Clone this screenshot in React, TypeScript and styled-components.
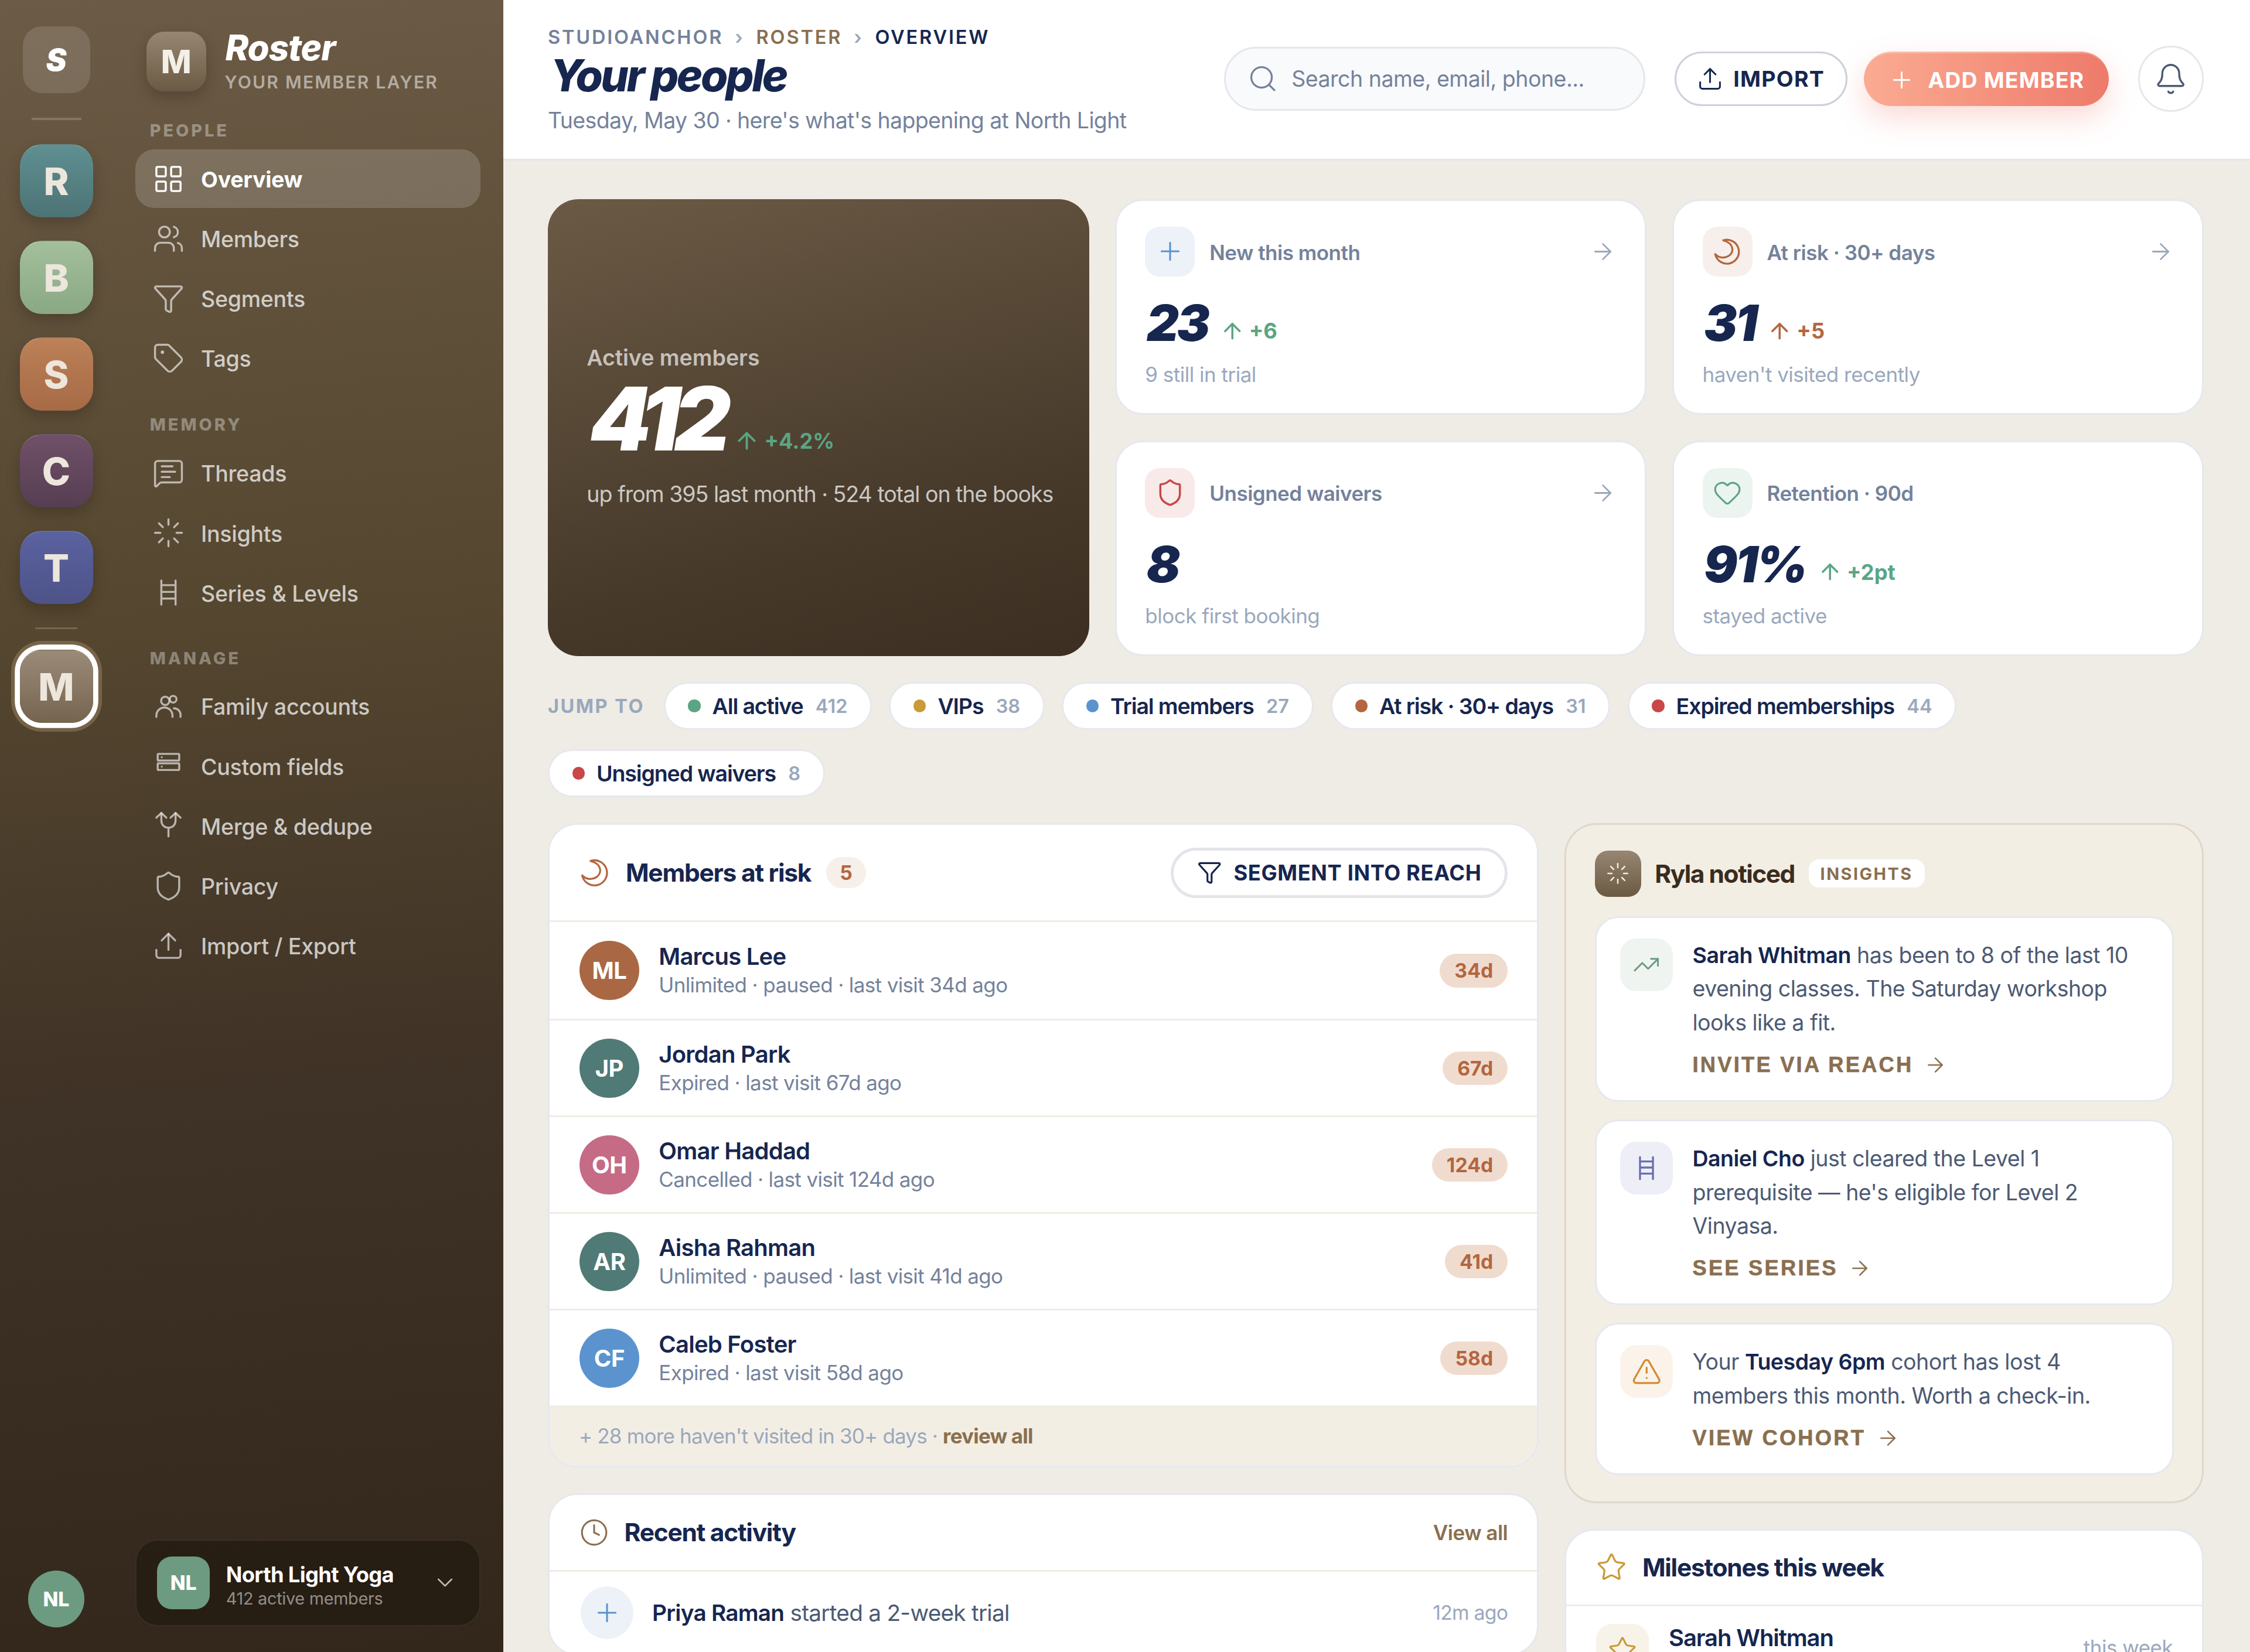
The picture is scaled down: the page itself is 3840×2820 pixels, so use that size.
import React from "react";
import styled, { createGlobalStyle } from "styled-components";
import {
  LayoutGrid, Users, Funnel, Tag, MessageSquareText, Loader, Shield, Upload, Bell, Search, Plus, ArrowRight, ArrowUp,
  Heart, Clock, Star, TrendingUp, TriangleAlert, ChevronDown,
} from "lucide-react";

const NAVY = "#16264f";
const SLATE = "#74829b";
const MUTED = "#9aa8bc";
const BROWN = "#8a6f4f";
const RUST = "#b4663f";
const GREEN = "#5aa583";
const BODY = `"Inter", "Noto Sans", sans-serif`;
const DISPLAY = `"Inter", "Liberation Sans", sans-serif`;
const WIDE = `"Liberation Sans", "Inter", sans-serif`;

const Global = createGlobalStyle`
  html, body { margin: 0; padding: 0; background: #efece5; }
  body { font-family: ${BODY}; color: ${NAVY}; overflow: hidden; }
  * { box-sizing: border-box; }
`;

const Root = styled.div`
  zoom: 2.5;
  width: 1536px;
  height: 1128px;
  display: flex;
  overflow: hidden;
  background: #efece5;
`;

const Side = styled.aside`
  flex: 0 0 343.5px;
  display: flex;
  background: linear-gradient(175deg, #6c5b46 0%, #54462f 38%, #3f3226 66%, #33271b 100%);
`;

const Rail = styled.nav`
  flex: 0 0 76.8px;
  display: flex;
  flex-direction: column;
  align-items: center;
  padding: 18px 0 17px;
`;

const RailLogo = styled.div`
  width: 46px;
  height: 45.5px;
  border-radius: 13px;
  display: grid;
  place-items: center;
  background: rgba(255, 255, 255, 0.13);
  color: #fff;
  font: italic 900 21px ${DISPLAY};
`;

const RailRule = styled.div<{ $w: number; $top: number; $bottom: number }>`
  width: ${(p) => p.$w}px;
  height: 1.5px;
  margin: ${(p) => p.$top}px 0 ${(p) => p.$bottom}px;
  background: rgba(255, 255, 255, 0.18);
`;

const RailTile = styled.div<{ $from: string; $to: string; $active?: boolean }>`
  width: 50px;
  height: 50px;
  margin-bottom: 16px;
  flex: none;
  border-radius: 15px;
  display: grid;
  place-items: center;
  color: #ece6dc;
  font: 800 26px ${BODY};
  background: linear-gradient(180deg, ${(p) => p.$from}, ${(p) => p.$to});
  border-top: 1px solid rgba(255, 255, 255, 0.14);
  box-shadow: ${(p) =>
    p.$active
      ? "0 0 0 3.5px #fff, 0 0 0 6px rgba(150, 125, 95, 0.55)"
      : "0 4px 10px rgba(0, 0, 0, 0.2)"};
`;

const RailAvatar = styled.div`
  margin-top: auto;
  width: 38.5px;
  height: 38.5px;
  border-radius: 50%;
  display: grid;
  place-items: center;
  background: #6d9b82;
  color: #fff;
  font: 800 13.5px ${BODY};
`;

const Panel = styled.div`
  flex: 1;
  display: flex;
  flex-direction: column;
  padding: 21.5px 15.5px 17.5px 15.7px;
`;

const Brand = styled.div`
  display: flex;
  gap: 12.5px;
  padding-left: 7.3px;
  height: 41px;
  align-items: center;
`;

const BrandTile = styled.div`
  width: 41px;
  height: 41px;
  border-radius: 12px;
  display: grid;
  place-items: center;
  color: #f4efe7;
  font: 800 22px ${BODY};
  background: linear-gradient(180deg, #978672, #6a5a43);
  box-shadow: 0 4px 10px rgba(0, 0, 0, 0.2);
`;

const BrandText = styled.div`
  display: flex;
  flex-direction: column;
`;

const BrandName = styled.div`
  color: #fff;
  font: italic 800 24px/23px ${DISPLAY};
  letter-spacing: -0.4px;
  margin-left: 0.5px;
`;

const BrandTag = styled.div`
  margin-top: 5px;
  color: rgba(255, 255, 255, 0.5);
  font: 600 12px/14px ${BODY};
  letter-spacing: 0.9px;
`;

const SectionLabel = styled.div<{ $top: number; $bottom: number }>`
  margin: ${(p) => p.$top}px 0 ${(p) => p.$bottom}px 9.8px;
  color: rgba(255, 255, 255, 0.36);
  font: 800 11.5px/14px ${BODY};
  letter-spacing: 1.6px;
`;

const NavList = styled.div`
  display: flex;
  flex-direction: column;
  gap: 0.85px;
`;

const NavItem = styled.div<{ $active?: boolean }>`
  height: 40px;
  padding-left: 11.3px;
  display: flex;
  align-items: center;
  gap: 11.4px;
  border-radius: 13px;
  color: ${(p) => (p.$active ? "#fff" : "rgba(255,255,255,0.72)")};
  background: ${(p) => (p.$active ? "rgba(255,255,255,0.16)" : "transparent")};
  font: ${(p) => (p.$active ? 700 : 500)} 15px ${BODY};
  letter-spacing: -0.1px;
  svg {
    flex: none;
    opacity: ${(p) => (p.$active ? 1 : 0.85)};
  }
`;

const NavLabel = styled.span`
  padding-top: 1px;
`;

const OrgCard = styled.div`
  margin-top: auto;
  height: 59.5px;
  display: flex;
  align-items: center;
  padding: 0 14.5px 0 14px;
  gap: 11px;
  border-radius: 15px;
  background: rgba(20, 14, 8, 0.42);
  border: 1px solid rgba(255, 255, 255, 0.08);
  color: rgba(255, 255, 255, 0.7);
`;

const OrgTile = styled.div`
  width: 36px;
  height: 36px;
  flex: none;
  border-radius: 10px;
  display: grid;
  place-items: center;
  background: #6d9b82;
  color: #fff;
  font: 800 13.5px ${BODY};
`;

const OrgText = styled.div`
  flex: 1;
  display: flex;
  flex-direction: column;
  padding-top: 3px;
`;

const OrgName = styled.div`
  color: #fff;
  font: 700 14.5px/18px ${BODY};
  letter-spacing: -0.25px;
`;

const OrgSub = styled.div`
  color: rgba(255, 255, 255, 0.5);
  font: 400 11.5px/14px ${BODY};
  letter-spacing: -0.1px;
`;

const Main = styled.main`
  flex: 1;
  min-width: 0;
  display: flex;
  flex-direction: column;
`;

const TopBar = styled.header`
  flex: 0 0 109.5px;
  display: flex;
  align-items: flex-start;
  justify-content: space-between;
  padding: 17px 31.5px 0 30.5px;
  background: #fff;
  border-bottom: 1.5px solid #e5e7ec;
`;

const TitleBlock = styled.div`
  display: flex;
  flex-direction: column;
`;

const Crumbs = styled.div`
  display: flex;
  align-items: center;
  gap: 8px;
  font: 600 13px/17px ${BODY};
  letter-spacing: 1.13px;
  text-transform: uppercase;
`;

const Crumb = styled.span<{ $color: string }>`
  color: ${(p) => p.$color};
`;

const Title = styled.h1`
  margin: -0.5px 0 0 1.5px;
  color: ${NAVY};
  font: italic 800 30px/36px ${DISPLAY};
  letter-spacing: -1.4px;
`;

const Subtitle = styled.div`
  margin-top: 1.5px;
  color: ${SLATE};
  font: 400 15px/22px ${BODY};
  letter-spacing: -0.25px;
`;

const Actions = styled.div`
  display: flex;
  align-items: center;
  height: 45px;
  margin-top: 14.3px;
`;

const SearchBox = styled.div`
  width: 287.5px;
  height: 43.5px;
  display: flex;
  align-items: center;
  gap: 9px;
  padding-left: 15px;
  margin-right: 20px;
  border-radius: 22px;
  background: #f9fafc;
  border: 1.5px solid #e5e7ec;
  color: ${SLATE};
  font: 400 15px ${BODY};
  letter-spacing: -0.2px;
`;

const GhostButton = styled.div`
  width: 118px;
  height: 37.5px;
  margin-right: 11.5px;
  display: flex;
  align-items: center;
  justify-content: center;
  gap: 7px;
  border-radius: 19px;
  border: 1.5px solid #cdd1dc;
  color: ${NAVY};
  font: 700 15px ${BODY};
  letter-spacing: 0.5px;
`;

const PrimaryButton = styled.div`
  width: 167px;
  height: 37.5px;
  margin-right: 20px;
  display: flex;
  align-items: center;
  justify-content: center;
  gap: 9px;
  border-radius: 19px;
  color: #fff;
  font: 700 15px ${BODY};
  letter-spacing: 0.45px;
  background: linear-gradient(90deg, #fbab92, #ee7a6a);
  border-top: 1.5px solid rgba(255, 255, 255, 0.28);
  box-shadow: 0 8px 20px rgba(238, 122, 106, 0.28);
`;

const BellButton = styled.div`
  width: 45px;
  height: 45px;
  display: grid;
  place-items: center;
  border-radius: 50%;
  border: 1.5px solid #e5e7ec;
  color: #4c5a73;
`;

const Content = styled.div`
  flex: 1;
  min-height: 0;
  overflow: hidden;
  padding: 26.5px 31.5px 0 30.5px;
`;

const StatGrid = styled.section`
  display: grid;
  grid-template-columns: 369.5px 1fr 1fr;
  grid-template-rows: 147.25px 147.25px;
  gap: 17.5px;
`;

const Hero = styled.div`
  grid-row: span 2;
  display: flex;
  flex-direction: column;
  justify-content: center;
  padding: 0 26.5px 2px;
  border-radius: 21px;
  color: #fff;
  background: linear-gradient(165deg, #6b5a45 0%, #46392a 70%, #3c2f21 100%);
`;

const HeroLabel = styled.div`
  color: rgba(255, 255, 255, 0.66);
  font: 600 15px/20px ${BODY};
`;

const HeroValueRow = styled.div`
  display: flex;
  align-items: baseline;
  gap: 6px;
  margin-top: -0.5px;
`;

const HeroValue = styled.div`
  margin-left: 2px;
  font: italic 900 60px/64px ${DISPLAY};
  letter-spacing: -4.2px;
`;

const Delta = styled.div<{ $color: string; $size: number }>`
  display: flex;
  align-items: center;
  gap: 3px;
  color: ${(p) => p.$color};
  font: 700 ${(p) => p.$size}px ${BODY};
  white-space: nowrap;
  align-self: flex-end;
`;

const HeroDelta = styled(Delta)`
  margin-bottom: 8px;
`;

const HeroNote = styled.div`
  margin-top: 9.5px;
  color: rgba(255, 255, 255, 0.72);
  font: 400 15px/20px ${BODY};
  letter-spacing: -0.4px;
  white-space: nowrap;
`;

const StatCard = styled.div`
  padding: 17.5px 19.5px 0;
  background: #fff;
  border: 1.5px solid #e6e8ee;
  border-radius: 19px;
`;

const StatHead = styled.div`
  display: flex;
  align-items: center;
  gap: 10px;
  color: ${MUTED};
`;

const IconTile = styled.div<{ $bg: string; $color: string; $size?: number; $radius?: number }>`
  flex: none;
  width: ${(p) => p.$size ?? 34}px;
  height: ${(p) => p.$size ?? 34}px;
  border-radius: ${(p) => p.$radius ?? 10}px;
  display: grid;
  place-items: center;
  background: ${(p) => p.$bg};
  color: ${(p) => p.$color};
`;

const StatLabel = styled.div`
  flex: 1;
  padding-top: 1px;
  color: ${SLATE};
  font: 600 14px ${BODY};
  letter-spacing: -0.2px;
`;

const StatValueRow = styled.div`
  display: flex;
  align-items: baseline;
  gap: 8px;
  margin-top: 14px;
  height: 36px;
`;

const StatValue = styled.div`
  color: ${NAVY};
  font: italic 900 34px/36px ${DISPLAY};
  letter-spacing: -1.4px;
  margin-left: 1px;
`;

const StatDelta = styled(Delta)`
  margin-bottom: 4px;
`;

const StatNote = styled.div`
  margin-top: 7px;
  color: ${MUTED};
  font: 400 14px/20px ${BODY};
  letter-spacing: -0.2px;
`;

const JumpRow = styled.section`
  margin-top: 17.5px;
  display: flex;
  flex-wrap: wrap;
  align-items: center;
  gap: 13px 11.7px;
`;

const JumpLabel = styled.div`
  color: ${MUTED};
  font: 700 13px ${BODY};
  letter-spacing: 1px;
  margin-right: 1.3px;
`;

const Chip = styled.div`
  height: 33px;
  display: flex;
  align-items: center;
  gap: 8.5px;
  padding: 0 15.5px;
  background: #fff;
  border: 1.5px solid #e7e8ec;
  border-radius: 17px;
  color: ${NAVY};
  font: 600 15px ${BODY};
  letter-spacing: -0.45px;
`;

const Dot = styled.span<{ $color: string }>`
  width: 8.5px;
  height: 8.5px;
  margin-right: -0.5px;
  border-radius: 50%;
  background: ${(p) => p.$color};
`;

const ChipCount = styled.span`
  color: ${MUTED};
  font-size: 13px;
  letter-spacing: 0;
`;

const Columns = styled.section`
  margin-top: 17.5px;
  display: grid;
  grid-template-columns: 676.5px 1fr;
  gap: 17.5px;
  align-items: start;
`;

const Column = styled.div`
  display: flex;
  flex-direction: column;
  gap: 17.5px;
`;

const Card = styled.div`
  background: #fff;
  border: 1.5px solid #e6e8ee;
  border-radius: 20px;
  overflow: hidden;
`;

const CardHead = styled.div<{ $h: number }>`
  height: ${(p) => p.$h}px;
  display: flex;
  align-items: center;
  gap: 10.5px;
  padding: 0 20px 0 20.5px;
  border-bottom: 1.5px solid #efece5;
`;

const CardTitle = styled.div`
  color: ${NAVY};
  font: 700 17px ${BODY};
  letter-spacing: -0.5px;
`;

const CountPill = styled.div`
  width: 27px;
  height: 21px;
  border-radius: 10.5px;
  display: grid;
  place-items: center;
  background: #f7efe9;
  color: ${RUST};
  font: 700 13.5px ${BODY};
`;

const OutlineButton = styled.div`
  margin-left: auto;
  width: 230px;
  height: 34.5px;
  display: flex;
  align-items: center;
  justify-content: center;
  gap: 8px;
  border-radius: 18px;
  border: 2px solid #e3e5eb;
  color: ${NAVY};
  font: 700 14.5px ${BODY};
  letter-spacing: 0.25px;
`;

const MemberRow = styled.div`
  height: 66px;
  display: flex;
  align-items: center;
  gap: 13.5px;
  padding: 0 20px 0 20.5px;
  & + & {
    border-top: 1.5px solid #efece5;
  }
`;

const Avatar = styled.div<{ $color: string }>`
  width: 40.5px;
  height: 40.5px;
  flex: none;
  border-radius: 50%;
  display: grid;
  place-items: center;
  background: ${(p) => p.$color};
  color: #fff;
  font: 700 16px ${BODY};
  letter-spacing: -0.2px;
`;

const MemberText = styled.div`
  flex: 1;
  display: flex;
  flex-direction: column;
`;

const MemberName = styled.div`
  color: ${NAVY};
  font: 600 16px/19px ${BODY};
  letter-spacing: -0.3px;
`;

const MemberSub = styled.div`
  margin-top: 1px;
  color: ${SLATE};
  font: 400 14px/18px ${BODY};
  letter-spacing: -0.25px;
`;

const DayPill = styled.div`
  height: 23px;
  padding: 0 10px;
  display: flex;
  align-items: center;
  border-radius: 11.5px;
  background: #f0dccf;
  color: ${RUST};
  font: 700 13.5px ${BODY};
`;

const CardFoot = styled.div`
  height: 41px;
  display: flex;
  align-items: center;
  padding-left: 20px;
  background: #f3eee4;
  color: ${MUTED};
  font: 400 14px ${BODY};
  letter-spacing: -0.33px;
  white-space: pre;
  b {
    color: ${BROWN};
    font-weight: 700;
  }
`;

const HeadLink = styled.div`
  margin-left: auto;
  color: ${BROWN};
  font: 600 14px ${BODY};
  letter-spacing: -0.2px;
`;

const ActivityRow = styled.div`
  height: 56px;
  display: flex;
  align-items: center;
  gap: 13px;
  padding: 0 20px 0 21px;
`;

const ActivityText = styled.div`
  flex: 1;
  color: #4c5a73;
  font: 400 15.5px ${BODY};
  letter-spacing: -0.3px;
  b {
    color: ${NAVY};
    font-weight: 600;
  }
`;

const TimeText = styled.div`
  color: ${MUTED};
  font: 400 13.5px ${BODY};
  letter-spacing: -0.3px;
`;

const InsightPanel = styled.div`
  padding: 17.5px 19.5px 18px;
  background: #f3eee4;
  border: 1.5px solid #dfd7c9;
  border-radius: 22px;
`;

const InsightHead = styled.div`
  display: flex;
  align-items: center;
  gap: 9.5px;
  margin-bottom: 13.3px;
`;

const RylaTile = styled.div`
  width: 31.5px;
  height: 31.5px;
  border-radius: 9px;
  display: grid;
  place-items: center;
  background: linear-gradient(180deg, #978672, #6a5a43);
  color: #f1ece4;
`;

const RylaTitle = styled.div`
  color: #3a2c1e;
  font: 700 17px ${BODY};
  letter-spacing: -0.6px;
`;

const RylaBadge = styled.div`
  height: 19px;
  padding: 0 8px;
  display: flex;
  align-items: center;
  border-radius: 7px;
  background: #fff;
  color: ${BROWN};
  font: 700 11.5px ${BODY};
  letter-spacing: 1px;
`;

const InsightList = styled.div`
  display: flex;
  flex-direction: column;
  gap: 12px;
`;

const InsightCard = styled.div`
  display: flex;
  gap: 13.5px;
  padding: 14px 16px 14px 16px;
  background: #fff;
  border: 1.5px solid #e6e8ee;
  border-radius: 16px;
`;

const InsightBody = styled.div`
  flex: 1;
  min-width: 0;
`;

const InsightText = styled.div`
  color: #4c5a73;
  font: 400 15px/23px ${BODY};
  letter-spacing: -0.2px;
  b {
    color: ${NAVY};
    font-weight: 600;
  }
`;

const InsightAction = styled.div`
  margin-top: 7.5px;
  display: flex;
  align-items: center;
  gap: 7px;
  color: ${BROWN};
  font: 700 14.5px/20px ${WIDE};
  letter-spacing: 1.3px;
  -webkit-text-stroke: 0.25px currentColor;
`;

const MilestoneHead = styled(CardHead)`
  gap: 10.5px;
`;

const MilestoneRow = styled.div`
  display: flex;
  align-items: flex-start;
  gap: 13.5px;
  padding: 12px 20px 0 20.5px;
`;

const MilestoneName = styled.div`
  flex: 1;
  color: ${NAVY};
  font: 600 16px/19px ${BODY};
  letter-spacing: -0.45px;
`;

const MilestoneWhen = styled.div`
  margin-top: 7px;
  color: ${MUTED};
  font: 400 14px/19px ${BODY};
  letter-spacing: -0.2px;
`;

const HeadIcon = styled.span<{ $color: string }>`
  display: flex;
  color: ${(p) => p.$color};
`;

const IconSvg = styled.svg`
  display: block;
  flex: none;
  fill: none;
  stroke: currentColor;
  stroke-linecap: round;
  stroke-linejoin: round;
`;

type IP = { size?: number; sw?: number };
const Ladder = ({ size = 22, sw = 1.5 }: IP) => (
  <IconSvg width={size} height={size} viewBox="0 0 24 24" strokeWidth={sw}>
    <path d="M6.7 3v18M17.3 3v18M6.7 6.5h10.6M6.7 11.5h10.6M6.7 16.5h10.6" />
  </IconSvg>
);
const Family = ({ size = 22, sw = 1.5 }: IP) => (
  <IconSvg width={size} height={size} viewBox="0 0 24 24" strokeWidth={sw}>
    <circle cx="9.6" cy="8" r="3.1" />
    <circle cx="15.5" cy="6.8" r="2.5" />
    <path d="M3 20v-1a6 6 0 0 1 12 0v1" />
    <path d="M16 13.5a5 5 0 0 1 5 5V20" />
  </IconSvg>
);
const Fields = ({ size = 22, sw = 1.5 }: IP) => (
  <IconSvg width={size} height={size} viewBox="0 0 24 24" strokeWidth={sw}>
    <rect x="4" y="3" width="16" height="5" rx="0.6" />
    <rect x="4" y="10" width="16" height="5" rx="0.6" />
    <path d="M7 5.5h.01M7 12.5h.01" />
  </IconSvg>
);
const Fork = ({ size = 22, sw = 1.5 }: IP) => (
  <IconSvg width={size} height={size} viewBox="0 0 24 24" strokeWidth={sw}>
    <path d="M12 20v-6.5M12 13.5c-3.5 0-5.3-2.5-5.3-5.5V2.5M12 13.5c3.5 0 5.3-2.5 5.3-5.5V2.5" />
    <path d="M3 6l3.7-3.5L10.4 6M13.6 6l3.7-3.5L21 6" />
  </IconSvg>
);
const Crescent = ({ size = 20, sw = 1.6 }: IP) => (
  <IconSvg width={size} height={size} viewBox="0 0 24 24" strokeWidth={sw}>
    <path d="M8.7 3a9.8 9.8 0 1 1-6.6 11.4" />
    <path d="M2.1 14.4c3.4 3.4 8 3.4 11.2 1.2 4-2.8 4.8-9.8-4.6-12.6" />
  </IconSvg>
);

const railTiles = [
  ["R", "#5f8f91", "#4d7375"],
  ["B", "#a3bf9c", "#8aa883"],
  ["S", "#bd8158", "#a66a45"],
  ["C", "#6f5068", "#563e52"],
  ["T", "#5a62a0", "#4d5388"],
];

const NI = 22;
const navSections = [
  {
    label: "PEOPLE", top: 19.5, bottom: 6,
    items: [
      ["Overview", <LayoutGrid size={NI} strokeWidth={1.5} />, true],
      ["Members", <Users size={NI} strokeWidth={1.5} />],
      ["Segments", <Funnel size={NI} strokeWidth={1.5} />],
      ["Tags", <Tag size={NI} strokeWidth={1.5} />],
    ],
  },
  {
    label: "MEMORY", top: 18.2, bottom: 6.3,
    items: [
      ["Threads", <MessageSquareText size={NI} strokeWidth={1.5} />],
      ["Insights", <Loader size={NI} strokeWidth={1.5} />],
      ["Series & Levels", <Ladder />],
    ],
  },
  {
    label: "MANAGE", top: 17.7, bottom: 5.8,
    items: [
      ["Family accounts", <Family />],
      ["Custom fields", <Fields />],
      ["Merge & dedupe", <Fork />],
      ["Privacy", <Shield size={NI} strokeWidth={1.5} />],
      ["Import / Export", <Upload size={NI} strokeWidth={1.5} />],
    ],
  },
] as const;

const stats = [
  { label: "New this month", value: "23", delta: "+6", note: "9 still in trial", tone: GREEN, bg: "#edf2f9", color: "#5b93cf", icon: <Plus size={20} strokeWidth={1.5} />, arrow: true },
  { label: "At risk · 30+ days", value: "31", delta: "+5", note: "haven't visited recently", tone: RUST, bg: "#f7efeb", color: RUST, icon: <Crescent />, arrow: true },
  { label: "Unsigned waivers", value: "8", note: "block first booking", tone: GREEN, bg: "#f9eaea", color: "#c94747", icon: <Shield size={20} strokeWidth={1.7} />, arrow: true },
  { label: "Retention · 90d", value: "91%", delta: "+2pt", note: "stayed active", tone: GREEN, bg: "#ecf4f0", color: GREEN, icon: <Heart size={20} strokeWidth={1.5} />, arrow: false },
];

const chips = [
  ["All active", "412", "#5aa583"],
  ["VIPs", "38", "#c99a3a"],
  ["Trial members", "27", "#5b93cf"],
  ["At risk · 30+ days", "31", "#b4663f"],
  ["Expired memberships", "44", "#c94747"],
  ["Unsigned waivers", "8", "#c94747"],
];

const members = [
  ["ML", "#a96843", "Marcus Lee", "Unlimited · paused · last visit 34d ago", "34d"],
  ["JP", "#507a75", "Jordan Park", "Expired · last visit 67d ago", "67d"],
  ["OH", "#c56b85", "Omar Haddad", "Cancelled · last visit 124d ago", "124d"],
  ["AR", "#507a75", "Aisha Rahman", "Unlimited · paused · last visit 41d ago", "41d"],
  ["CF", "#5b93cf", "Caleb Foster", "Expired · last visit 58d ago", "58d"],
];

export default function App() {
  return (
    <>
      <Global />
      <Root>
        <Side>
          <Rail>
            <RailLogo>S</RailLogo>
            <RailRule $w={34} $top={17} $bottom={16.2} />
            {railTiles.map(([l, a, b]) => (
              <RailTile key={l} $from={a} $to={b}>{l}</RailTile>
            ))}
            <RailRule $w={29} $top={0} $bottom={13.8} />
            <RailTile $from="#9a8a78" $to="#75654f" $active>M</RailTile>
            <RailAvatar>NL</RailAvatar>
          </Rail>
          <Panel>
            <Brand>
              <BrandTile>M</BrandTile>
              <BrandText>
                <BrandName>Roster</BrandName>
                <BrandTag>YOUR MEMBER LAYER</BrandTag>
              </BrandText>
            </Brand>
            {navSections.map((s) => (
              <React.Fragment key={s.label}>
                <SectionLabel $top={s.top} $bottom={s.bottom}>{s.label}</SectionLabel>
                <NavList>
                  {s.items.map((it) => (
                    <NavItem key={it[0] as string} $active={Boolean(it[2])}>
                      {it[1]}
                      <NavLabel>{it[0]}</NavLabel>
                    </NavItem>
                  ))}
                </NavList>
              </React.Fragment>
            ))}
            <OrgCard>
              <OrgTile>NL</OrgTile>
              <OrgText>
                <OrgName>North Light Yoga</OrgName>
                <OrgSub>412 active members</OrgSub>
              </OrgText>
              <ChevronDown size={18} strokeWidth={1.5} />
            </OrgCard>
          </Panel>
        </Side>
        <Main>
          <TopBar>
            <TitleBlock>
              <Crumbs>
                <Crumb $color={SLATE}>StudioAnchor</Crumb>
                <Crumb $color={MUTED}>›</Crumb>
                <Crumb $color={BROWN}>Roster</Crumb>
                <Crumb $color={MUTED}>›</Crumb>
                <Crumb $color={NAVY}>Overview</Crumb>
              </Crumbs>
              <Title>Your people</Title>
              <Subtitle>Tuesday, May 30 · here's what's happening at North Light</Subtitle>
            </TitleBlock>
            <Actions>
              <SearchBox>
                <Search size={21} strokeWidth={1.5} />
                Search name, email, phone...
              </SearchBox>
              <GhostButton>
                <Upload size={18} strokeWidth={1.6} />
                IMPORT
              </GhostButton>
              <PrimaryButton>
                <Plus size={18} strokeWidth={1.6} />
                ADD MEMBER
              </PrimaryButton>
              <BellButton>
                <Bell size={23} strokeWidth={1.4} />
              </BellButton>
            </Actions>
          </TopBar>
          <Content>
            <StatGrid>
              <Hero>
                <HeroLabel>Active members</HeroLabel>
                <HeroValueRow>
                  <HeroValue>412</HeroValue>
                  <HeroDelta $color={GREEN} $size={14.5}>
                    <ArrowUp size={18} strokeWidth={2} />
                    +4.2%
                  </HeroDelta>
                </HeroValueRow>
                <HeroNote>up from 395 last month · 524 total on the books</HeroNote>
              </Hero>
              {stats.map((s) => (
                <StatCard key={s.label}>
                  <StatHead>
                    <IconTile $bg={s.bg} $color={s.color}>{s.icon}</IconTile>
                    <StatLabel>{s.label}</StatLabel>
                    {s.arrow && <ArrowRight size={18} strokeWidth={1.5} />}
                  </StatHead>
                  <StatValueRow>
                    <StatValue>{s.value}</StatValue>
                    {s.delta && (
                      <StatDelta $color={s.tone} $size={14.5}>
                        <ArrowUp size={17} strokeWidth={2} />
                        {s.delta}
                      </StatDelta>
                    )}
                  </StatValueRow>
                  <StatNote>{s.note}</StatNote>
                </StatCard>
              ))}
            </StatGrid>

            <JumpRow>
              <JumpLabel>JUMP TO</JumpLabel>
              {chips.map(([label, count, color]) => (
                <Chip key={label}>
                  <Dot $color={color} />
                  {label}
                  <ChipCount>{count}</ChipCount>
                </Chip>
              ))}
            </JumpRow>

            <Columns>
              <Column>
                <Card>
                  <CardHead $h={66.5}>
                    <HeadIcon $color={RUST}><Crescent size={21} sw={1.5} /></HeadIcon>
                    <CardTitle>Members at risk</CardTitle>
                    <CountPill>5</CountPill>
                    <OutlineButton>
                      <Funnel size={17} strokeWidth={1.8} />
                      SEGMENT INTO REACH
                    </OutlineButton>
                  </CardHead>
                  {members.map(([init, color, name, sub, days]) => (
                    <MemberRow key={name}>
                      <Avatar $color={color}>{init}</Avatar>
                      <MemberText>
                        <MemberName>{name}</MemberName>
                        <MemberSub>{sub}</MemberSub>
                      </MemberText>
                      <DayPill>{days}</DayPill>
                    </MemberRow>
                  ))}
                  <CardFoot>
                    + 28 more haven't visited in 30+ days · <b>review all</b>
                  </CardFoot>
                </Card>
                <Card>
                  <CardHead $h={52.5}>
                    <HeadIcon $color={BROWN}><Clock size={20} strokeWidth={1.5} /></HeadIcon>
                    <CardTitle>Recent activity</CardTitle>
                    <HeadLink>View all</HeadLink>
                  </CardHead>
                  <ActivityRow>
                    <IconTile $bg="#edf2f9" $color="#5b93cf" $size={36} $radius={18}>
                      <Plus size={20} strokeWidth={1.5} />
                    </IconTile>
                    <ActivityText><b>Priya Raman</b> started a 2-week trial</ActivityText>
                    <TimeText>12m ago</TimeText>
                  </ActivityRow>
                </Card>
              </Column>
              <Column>
                <InsightPanel>
                  <InsightHead>
                    <RylaTile><Loader size={16} strokeWidth={1.5} /></RylaTile>
                    <RylaTitle>Ryla noticed</RylaTitle>
                    <RylaBadge>INSIGHTS</RylaBadge>
                  </InsightHead>
                  <InsightList>
                    <InsightCard>
                      <IconTile $bg="#eff4f0" $color="#6d9b82" $size={36} $radius={11}>
                        <TrendingUp size={19} strokeWidth={1.5} />
                      </IconTile>
                      <InsightBody>
                        <InsightText><b>Sarah Whitman</b> has been to 8 of the last 10 evening classes. The Saturday workshop looks like a fit.</InsightText>
                        <InsightAction>INVITE VIA REACH <ArrowRight size={16} strokeWidth={1.5} /></InsightAction>
                      </InsightBody>
                    </InsightCard>
                    <InsightCard>
                      <IconTile $bg="#eeeff6" $color="#6a6fb0" $size={36} $radius={11}>
                        <Ladder size={20} sw={1.6} />
                      </IconTile>
                      <InsightBody>
                        <InsightText><b>Daniel Cho</b> just cleared the Level 1 prerequisite — he's eligible for Level 2 Vinyasa.</InsightText>
                        <InsightAction>SEE SERIES <ArrowRight size={16} strokeWidth={1.5} /></InsightAction>
                      </InsightBody>
                    </InsightCard>
                    <InsightCard>
                      <IconTile $bg="#fbf3ea" $color="#d28b32" $size={36} $radius={11}>
                        <TriangleAlert size={21} strokeWidth={1.5} />
                      </IconTile>
                      <InsightBody>
                        <InsightText>Your <b>Tuesday 6pm</b> cohort has lost 4 members this month. Worth a check-in.</InsightText>
                        <InsightAction>VIEW COHORT <ArrowRight size={16} strokeWidth={1.5} /></InsightAction>
                      </InsightBody>
                    </InsightCard>
                  </InsightList>
                </InsightPanel>
                <Card>
                  <MilestoneHead $h={51.5}>
                    <HeadIcon $color="#c99a3a"><Star size={21} strokeWidth={1.5} /></HeadIcon>
                    <CardTitle>Milestones this week</CardTitle>
                  </MilestoneHead>
                  <MilestoneRow>
                    <IconTile $bg="#f8f3e8" $color="#c99a3a" $size={36} $radius={11}>
                      <Star size={20} strokeWidth={1.5} />
                    </IconTile>
                    <MilestoneName>Sarah Whitman</MilestoneName>
                    <MilestoneWhen>this week</MilestoneWhen>
                  </MilestoneRow>
                </Card>
              </Column>
            </Columns>
          </Content>
        </Main>
      </Root>
    </>
  );
}
